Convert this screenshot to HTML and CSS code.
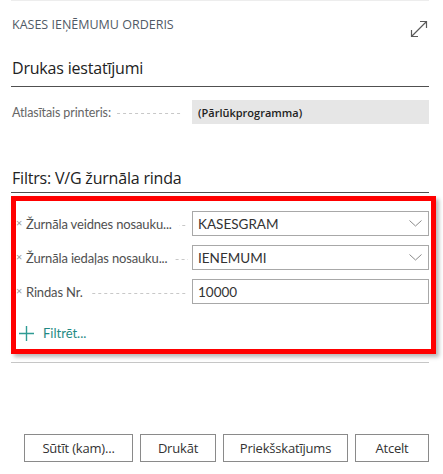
FILE: index.html
```html
<!DOCTYPE html>
<html lang="lv">
<head>
<meta charset="utf-8">
<title>Kases ieņēmumu orderis</title>
<link rel="stylesheet" href="styles.css">
</head>
<body>
<div class="dialog">
  <header class="top">
    <h1 class="title">KASES IEŅĒMUMU ORDERIS</h1>
    <svg class="expand" width="20" height="20" viewBox="0 0 20 20" aria-hidden="true">
      <path d="M2.5 17.5 L17.5 2.5 M11 2.5 H17.5 V9 M2.5 11 V17.5 H9" fill="none" stroke="#5a5a5a" stroke-width="1.2"/>
    </svg>
  </header>

  <section class="group">
    <h2 class="group-title">Drukas iestatījumi</h2>
    <div class="field">
      <span class="label small">Atlasītais printeris:</span>
      <span class="leader"></span>
      <div class="value readonly">(Pārlūkprogramma)</div>
    </div>
  </section>

  <section class="group filters">
    <h2 class="group-title tight">Filtrs: V/G žurnāla rinda</h2>
    <div class="highlight">
      <div class="frow">
        <span class="remove">×</span>
        <span class="label">Žurnāla veidnes nosauku...</span>
        <span class="leader"></span>
        <div class="value input select">KASESGRAM<svg class="chev" width="13" height="7" viewBox="0 0 13 7"><path d="M0.5 0.5 L6.5 6 L12.5 0.5" fill="none" stroke="#8a8a8a" stroke-width="1"/></svg></div>
      </div>
      <div class="frow">
        <span class="remove">×</span>
        <span class="label">Žurnāla iedaļas nosauku...</span>
        <span class="leader"></span>
        <div class="value input select">IENEMUMI<svg class="chev" width="13" height="7" viewBox="0 0 13 7"><path d="M0.5 0.5 L6.5 6 L12.5 0.5" fill="none" stroke="#8a8a8a" stroke-width="1"/></svg></div>
      </div>
      <div class="frow">
        <span class="remove">×</span>
        <span class="label">Rindas Nr.</span>
        <span class="leader"></span>
        <div class="value input">10000</div>
      </div>
      <a class="add-filter" href="#"><svg width="15" height="15" viewBox="0 0 15 15"><path d="M7.5 0 V15 M0 7.5 H15" stroke="#2f9b94" stroke-width="1.4"/></svg><span>Filtrēt...</span></a>
    </div>
    <div class="sep"></div>
  </section>

  <footer class="actions">
    <button class="btn b1">Sūtīt (kam)...</button>
    <button class="btn b2">Drukāt</button>
    <button class="btn b3">Priekšskatījums</button>
    <button class="btn b4">Atcelt</button>
  </footer>
</div>
</body>
</html>
```

FILE: styles.css
```css
* { box-sizing: border-box; }
html, body { margin: 0; padding: 0; background: #fff; }
body {
  font-family: "Open Sans", "Noto Sans", sans-serif;
  color: #333;
  width: 443px;
  height: 474px;
  overflow: hidden;
}
.dialog {
  height: 474px;
  display: flex;
  flex-direction: column;
  padding: 0 14px 12px 11px;
}
.top {
  border-top: 1px solid #ededed;
  display: flex;
  justify-content: space-between;
  align-items: flex-start;
  padding-top: 16px;
  height: 40px;
}
.title {
  margin: 0 0 0 1px;
  font-size: 12.5px;
  line-height: 16px;
  font-weight: 400;
  color: #505a66;
  letter-spacing: 0;
}
.expand { margin-top: 2px; margin-right: 0; }

.group { display: flex; flex-direction: column; }
.group-title {
  margin: 17px 0 0 0;
  padding-left: 1px;
  font-size: 16px;
  line-height: 22px;
  font-weight: 400;
  color: #222;
  padding-bottom: 7px;
  border-bottom: 1px solid #505050;
  letter-spacing: -0.2px;
}
.group-title.tight { margin-top: 43px; padding-bottom: 3px; }

.field {
  display: flex;
  align-items: center;
  margin-top: 13px;
  height: 24px;
  padding-left: 1px;
}
.label {
  font-family: Lato, "Open Sans", sans-serif;
  font-size: 13px;
  color: #505050;
  white-space: nowrap;
  letter-spacing: -0.15px;
  flex: 0 1 auto;
  min-width: 0;
}
.label.small { font-size: 12.5px; color: #666; letter-spacing: -0.1px; }
.leader {
  flex: 1 1 0;
  min-width: 4px;
  height: 1px;
  align-self: center;
  margin: 3px 9px 0 6px;
  background-image: linear-gradient(to right, #c8c8c8 0 3px, transparent 3px 6px);
  background-size: 6px 1px;
  background-position: right 0 top 0;
}
.value {
  width: 237px;
  height: 24px;
  flex: 0 0 237px;
  display: flex;
  align-items: center;
  padding-left: 6px;
}
.readonly {
  background: #e6e6e6;
  font-size: 11px;
  font-weight: 600;
  color: #222;
}

.highlight {
  margin: 3px -7px 0 0;
  border: 5px solid #ff0000;
  box-shadow: 3px 3px 4px rgba(0, 0, 0, 0.28);
  padding: 10px 2px 3px 0;
  display: flex;
  flex-direction: column;
  gap: 9px;
}
.frow {
  display: flex;
  align-items: center;
  height: 25px;
}
.remove {
  flex: none;
  font-size: 11px;
  color: #9a9a9a;
  width: 10px;
  line-height: 1;
  margin-top: -2px;
}
.frow .leader { margin: 3px 4px 0 7px; }
.input {
  height: 25px;
  border: 1px solid #a8a8a8;
  font-family: Lato, "Open Sans", sans-serif;
  font-size: 13.5px;
  color: #333;
  justify-content: space-between;
  padding: 1px 6px 0 5px;
}
.chev { margin-top: -1px; }
.add-filter {
  display: flex;
  align-items: center;
  gap: 9px;
  height: 26px;
  margin-top: 7px;
  padding-left: 3px;
  text-decoration: none;
  color: #1f8a84;
  font-family: Lato, "Open Sans", sans-serif;
  font-size: 13px;
}
.sep {
  margin-top: 8px;
  border-top: 1px solid #c6c6c6;
}

.actions {
  margin-top: auto;
  display: flex;
  justify-content: flex-end;
  gap: 7px;
  padding-right: 0;
}
.btn {
  height: 28px;
  background: #fff;
  border: 1px solid #8a8a8a;
  font-family: "Open Sans", "Noto Sans", sans-serif;
  font-size: 13px;
  color: #333;
  padding: 0;
  letter-spacing: -0.2px;
}
.b1 { width: 109px; }
.b2 { width: 76px; }
.b3 { width: 125px; }
.b4 { width: 74px; }
```
